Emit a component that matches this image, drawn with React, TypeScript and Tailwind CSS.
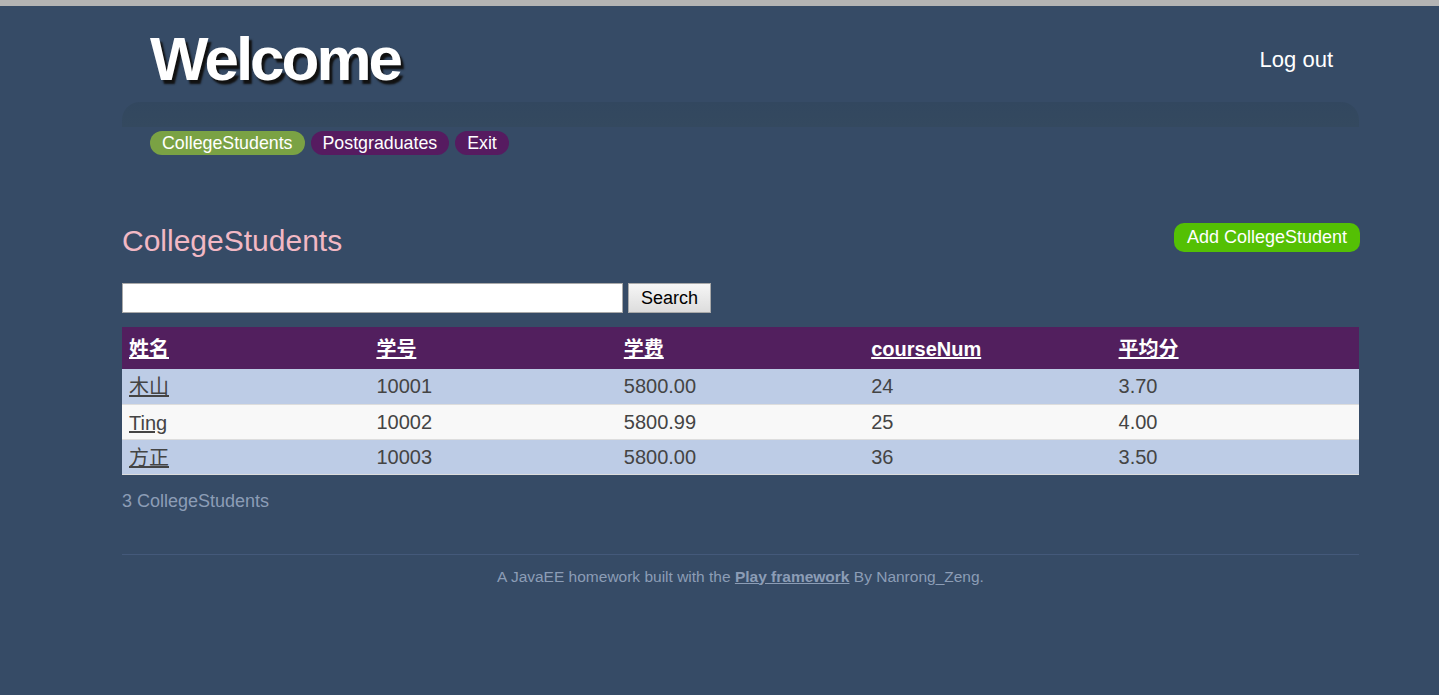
import React from 'react';

type Student = { name: string; id: string; fee: string; courses: number; gpa: string };

const STUDENTS: Student[] = [
  { name: '木山', id: '10001', fee: '5800.00', courses: 24, gpa: '3.70' },
  { name: 'Ting', id: '10002', fee: '5800.99', courses: 25, gpa: '4.00' },
  { name: '方正', id: '10003', fee: '5800.00', courses: 36, gpa: '3.50' },
];

const HEADERS = ['姓名', '学号', '学费', 'courseNum', '平均分'];

const FONT = "font-['Liberation_Sans','Noto_Sans_CJK_SC',sans-serif]";

const App: React.FC = () => {
  return (
    <div className={`min-h-[695px] bg-[#364b66] ${FONT}`}>
      {/* top grey strip of the browser frame */}
      <div className="h-[6px] bg-[#b4b4b4]" />

      <div className="ml-[122px] w-[1237px]">
        {/* header */}
        <header className="flex items-start justify-between">
          <h1 className="ml-[28px] mt-[20px] text-[62px] leading-[66px] font-bold tracking-[-3px] text-white [text-shadow:3px_4px_2px_#111]">
            Welcome
          </h1>
          <a className="mr-[26px] mt-[41px] text-[22px] leading-[26px] text-white">Log out</a>
        </header>

        {/* nav band */}
        <div className="mt-[10px] h-[25px] rounded-t-[18px] bg-gradient-to-b from-[#32475f] to-[#34495f]" />
        <nav className="flex gap-[6px] pl-[28px] pt-[4px]">
          <a className="rounded-full bg-[#7aa244] px-[12px] text-[17.8px] leading-[24px] text-white">CollegeStudents</a>
          <a className="rounded-full bg-[#561b60] px-[12px] text-[17.8px] leading-[24px] text-white">Postgraduates</a>
          <a className="rounded-full bg-[#561b60] px-[12px] text-[17.8px] leading-[24px] text-white">Exit</a>
        </nav>

        {/* title row */}
        <div className="mt-[68px] flex items-start justify-between">
          <h2 className="mt-[1px] text-[30px] leading-[34px] text-[#f2b8c4]">CollegeStudents</h2>
          <a className="-mr-px rounded-[10px] bg-[#54c004] px-[13px] text-[18px] leading-[29px] text-white">
            Add CollegeStudent
          </a>
        </div>

        {/* search */}
        <form className="mt-[25px] flex items-center gap-[5px]">
          <input className="h-[30px] w-[501px] border border-[#a9a9a9] bg-white px-1 text-[16px]" />
          <button
            type="button"
            className="h-[30px] w-[83px] border border-[#a9a9a9] bg-gradient-to-b from-[#f6f6f6] to-[#dddddd] text-[18px] text-black"
          >
            Search
          </button>
        </form>

        {/* table */}
        <table className="mt-[14px] w-full table-fixed border-collapse">
          <thead>
            <tr className="bg-[#521f5e]">
              {HEADERS.map((h) => (
                <th key={h} className="h-[42px] px-[7px] pt-[2px] text-left align-middle text-[20px] font-bold text-white underline">
                  {h}
                </th>
              ))}
            </tr>
          </thead>
          <tbody>
            {STUDENTS.map((s, i) => (
              <tr key={s.id} className={`${i % 2 === 0 ? 'bg-[#bdcce6]' : 'bg-[#f8f8f8]'} border-b border-[#dddddd] text-[20px] text-[#444]`}>
                <td className="h-[35px] px-[7px] pt-[2px]">
                  <a className="underline">{s.name}</a>
                </td>
                <td className="px-[7px]">{s.id}</td>
                <td className="px-[7px]">{s.fee}</td>
                <td className="px-[7px]">{s.courses}</td>
                <td className="px-[7px]">{s.gpa}</td>
              </tr>
            ))}
          </tbody>
        </table>

        <p className="mt-[16px] text-[18px] leading-[20px] text-[#8c9db6]">3 CollegeStudents</p>

        {/* footer */}
        <footer className="mt-[43px] border-t border-[#44597a] pt-[13px] text-center text-[15.5px] leading-[18px] text-[#8c9db6]">
          A JavaEE homework built with the <a className="font-bold underline">Play framework</a> By Nanrong_Zeng.
        </footer>
      </div>
    </div>
  );
};

export default App;
